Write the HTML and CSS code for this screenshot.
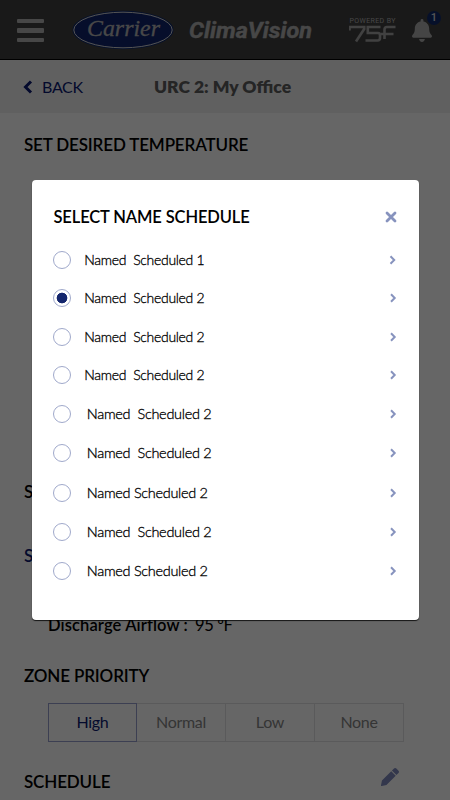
FILE: index.html
```html
<!DOCTYPE html>
<html lang="en">
<head>
<meta charset="utf-8">
<title>ClimaVision</title>
<link rel="stylesheet" href="styles.css">
</head>
<body>
<header class="topbar">
  <div class="menu"><i></i><i></i><i></i></div>
  <svg class="carrier" width="102" height="40" viewBox="0 0 102 40">
    <ellipse cx="51" cy="20" rx="50.5" ry="19.3" fill="#102969"/>
    <ellipse cx="51" cy="20" rx="49.2" ry="17.8" fill="#10246c" stroke="#d2d2d2" stroke-width="1"/>
    <text x="15" y="26" textLength="73" lengthAdjust="spacingAndGlyphs" class="carrier-text">Carrier</text>
  </svg>
  <div class="brand"><svg width="126" height="30" viewBox="0 0 126 30"><text x="1" y="22" textLength="123" lengthAdjust="spacingAndGlyphs" class="brand-text">ClimaVision</text></svg></div>
  <svg class="powered" width="48" height="28" viewBox="0 0 48 28">
    <text x="0.5" y="8" textLength="46" class="powered-text">POWERED BY</text>
    <g fill="none" stroke="#a2a2a2" stroke-width="2.6">
      <path d="M0.5 15.500V12H15.200V14L7 26.500"/>
      <path d="M31.500 12H18.800V18H29Q31 18 31 20V23Q31 25.500 28.500 25.500H16.500"/>
      <path d="M46.500 12H38Q35.500 12 35.500 14.500V24M32 19H44.500"/>
    </g>
  </svg>
  <div class="bell">
    <svg width="20" height="23" viewBox="0 0 448 512"><path fill="#adadad" d="M224 512c35 0 64-29 64-64H160c0 35 29 64 64 64zm215-150c-19-20-55-51-55-154 0-77-54-139-128-154V32a32 32 0 1 0-64 0v22C118 69 64 131 64 208c0 103-36 134-55 154-6 6-9 14-9 22 0 16 13 32 32 32h384c19 0 32-16 32-32 0-8-3-16-9-22z"/></svg>
    <span class="badge">1</span>
  </div>
</header>
<nav class="subbar">
  <svg width="10" height="14" viewBox="0 0 10 14"><path d="M8 1.500L2.500 7L8 12.500" fill="none" stroke="#0a1a70" stroke-width="3"/></svg>
  <span class="back">BACK</span>
  <span class="title">URC 2: My Office</span>
</nav>
<main class="page">
  <h2 class="h-temp">SET DESIRED TEMPERATURE</h2>
  <h2 class="h-status">STATUS</h2>
  <h2 class="h-supply">SUPPLY</h2>
  <p class="airflow"><b>Discharge Airflow :</b><span>95 ºF</span></p>
  <h2 class="h-zone">ZONE PRIORITY</h2>
  <div class="segments"><span class="active">High</span><span>Normal</span><span>Low</span><span>None</span></div>
  <div class="schedule">
    <h2>SCHEDULE</h2>
    <svg width="18" height="18" viewBox="0 0 512 512"><path fill="#808bbd" d="M291 93L27 357 0 488a20 20 0 0 0 24 24l131-27L419 221zM498 75L437 14c-19-19-49-19-67 0l-59 59 128 128 59-59c19-18 19-48 0-67z"/></svg>
  </div>
</main>
<div class="overlay">
  <section class="modal">
    <div class="modal-head">
      <h1>SELECT NAME SCHEDULE</h1>
      <svg width="12" height="12" viewBox="0 0 12 12"><path d="M2 2L10 10M10 2L2 10" stroke="#8793be" stroke-width="2.800" stroke-linecap="round"/></svg>
    </div>
    <ul class="list">
      <li><i class="radio"></i><span>Named  Scheduled 1</span><svg class="chev" viewBox="0 0 8 10"><path d="M1.500 1.300L5.200 5L1.500 8.700"/></svg></li>
      <li><i class="radio on"></i><span>Named  Scheduled 2</span><svg class="chev" viewBox="0 0 8 10"><path d="M2 1.300L5.700 5L2 8.700"/></svg></li>
      <li><i class="radio"></i><span>Named  Scheduled 2</span><svg class="chev" viewBox="0 0 8 10"><path d="M2 1.300L5.700 5L2 8.700"/></svg></li>
      <li><i class="radio"></i><span>Named  Scheduled 2</span><svg class="chev" viewBox="0 0 8 10"><path d="M2 1.300L5.700 5L2 8.700"/></svg></li>
      <li class="wide"><i class="radio"></i><span>Named  Scheduled 2</span><svg class="chev" viewBox="0 0 8 10"><path d="M2 1.300L5.700 5L2 8.700"/></svg></li>
      <li class="wide"><i class="radio"></i><span>Named  Scheduled 2</span><svg class="chev" viewBox="0 0 8 10"><path d="M2 1.300L5.700 5L2 8.700"/></svg></li>
      <li class="wide"><i class="radio"></i><span>Named Scheduled 2</span><svg class="chev" viewBox="0 0 8 10"><path d="M2 1.300L5.700 5L2 8.700"/></svg></li>
      <li class="wide"><i class="radio"></i><span>Named  Scheduled 2</span><svg class="chev" viewBox="0 0 8 10"><path d="M2 1.300L5.700 5L2 8.700"/></svg></li>
      <li class="wide"><i class="radio"></i><span>Named Scheduled 2</span><svg class="chev" viewBox="0 0 8 10"><path d="M2 1.300L5.700 5L2 8.700"/></svg></li>
    </ul>
  </section>
</div>
</body>
</html>
```
FILE: styles.css
```css
* { box-sizing: border-box; margin: 0; padding: 0; }
html, body { width: 450px; height: 800px; overflow: hidden; }
body { background: #fff; font-family: Lato, "Liberation Sans", sans-serif; color: #000; }
svg { display: block; flex: none; }
h2 { font-size: 17px; line-height: 20px; font-weight: 600; letter-spacing: -.15px; white-space: nowrap; }

.topbar { display: flex; height: 60px; background: #404040; border-bottom: 1px solid #000; }
.menu { width: 27px; margin: 19px 0 0 17px; display: flex; flex-direction: column; gap: 5.2px; }
.menu i { height: 4.2px; background: #b2b2b2; border-radius: 1px; }
.carrier { margin: 10px 0 0 28px; }
.carrier-text { font: italic 400 23.500px "Liberation Serif", serif; fill: #b5b5b5; stroke: #b5b5b5; stroke-width: .3px; }
.brand { margin: 16px 0 0 14px; }
.brand-text { font: italic 700 22px Roboto, sans-serif; fill: #b2b2b2; stroke: #b2b2b2; stroke-width: .4px; }
.powered { margin: 15px 0 0 35px; }
.powered-text { font: 7px Roboto, sans-serif; fill: #b0b0b0; }
.bell { position: relative; width: 20px; height: 23px; margin: 19px 0 0 15px; }
.badge { position: absolute; left: 15px; top: -8px; width: 14px; height: 14px; border-radius: 50%; background: #102969; color: #d8d8d8; font: 500 11px/14px Roboto, sans-serif; text-align: center; }

.subbar { display: flex; align-items: center; height: 53px; padding: 0 0 0 23px; background: #f0f0f0; }
.back { width: 112px; margin: -1px 0 0 9px; color: #0a1a70; font-size: 16px; letter-spacing: -.3px; }
.title { margin-top: -1px; color: #5c5c5c; font-size: 17.500px; font-weight: 800; white-space: nowrap; }

.page { padding: 22px 24px 0; }
.h-status { margin-top: 327px; }
.h-supply { margin-top: 44px; color: #0a1a70; }
.airflow { margin: 49px 0 0 24px; font-size: 16.500px; line-height: 20px; display: flex; gap: 7px; }
.airflow b { font-weight: 600; letter-spacing: .12px; }
.airflow span { letter-spacing: -.35px; }
.h-zone { margin-top: 31px; }
.segments { display: grid; grid-template-columns: 89px 89px 89px 89px; height: 39px; width: 356px; margin: 17px 0 0 24px; }
.segments span { border: 1px solid #e2e2e4; border-left: 0; color: #858585; font-size: 16px; letter-spacing: -.3px; line-height: 35px; text-align: center; }
.segments .active { border: 1px solid #969fcd; color: #0a1a70; }
.schedule { display: flex; justify-content: space-between; margin-top: 26px; padding: 0 27px 0 0; }
.schedule h2 { margin-top: 4px; }

.overlay { position: absolute; inset: 0; background: rgba(0, 0, 0, .6); padding: 180px 31.500px 0 31.500px; }
.modal { height: 440px; background: #fff; border-radius: 4px; padding: 26px 22px 0; box-shadow: 0 1px 1px rgba(0, 0, 0, .8); }
.modal-head { display: flex; justify-content: space-between; align-items: center; height: 22px; }
.modal-head h1 { font-size: 16.500px; line-height: 20px; font-weight: 600; letter-spacing: -.13px; white-space: nowrap; }
.list { list-style: none; margin-top: 13px; display: grid; grid-template-rows: 38px 38.500px 38.500px 38.500px 39px 39.500px 39.500px 39px 39px; }
.list li { display: flex; align-items: center; font-size: 14px; font-weight: 300; letter-spacing: -.3px; color: #000; white-space: pre; }
.list span { flex: 1; margin: -1px 0 0 13px; -webkit-text-stroke: .3px; }
.list .wide { font-size: 14.500px; }
.list .wide span { margin: -1px 0 0 15.500px; }
.radio { width: 18px; height: 18px; margin-left: -.2px; border: 1px solid #a0a9cb; border-radius: 50%; flex: none; }
.radio.on { background: radial-gradient(circle, #14266d 0 5px, transparent 5.700px); }
.chev { width: 8px; height: 10px; }
.chev path { fill: none; stroke: #8793be; stroke-width: 2; }
```
